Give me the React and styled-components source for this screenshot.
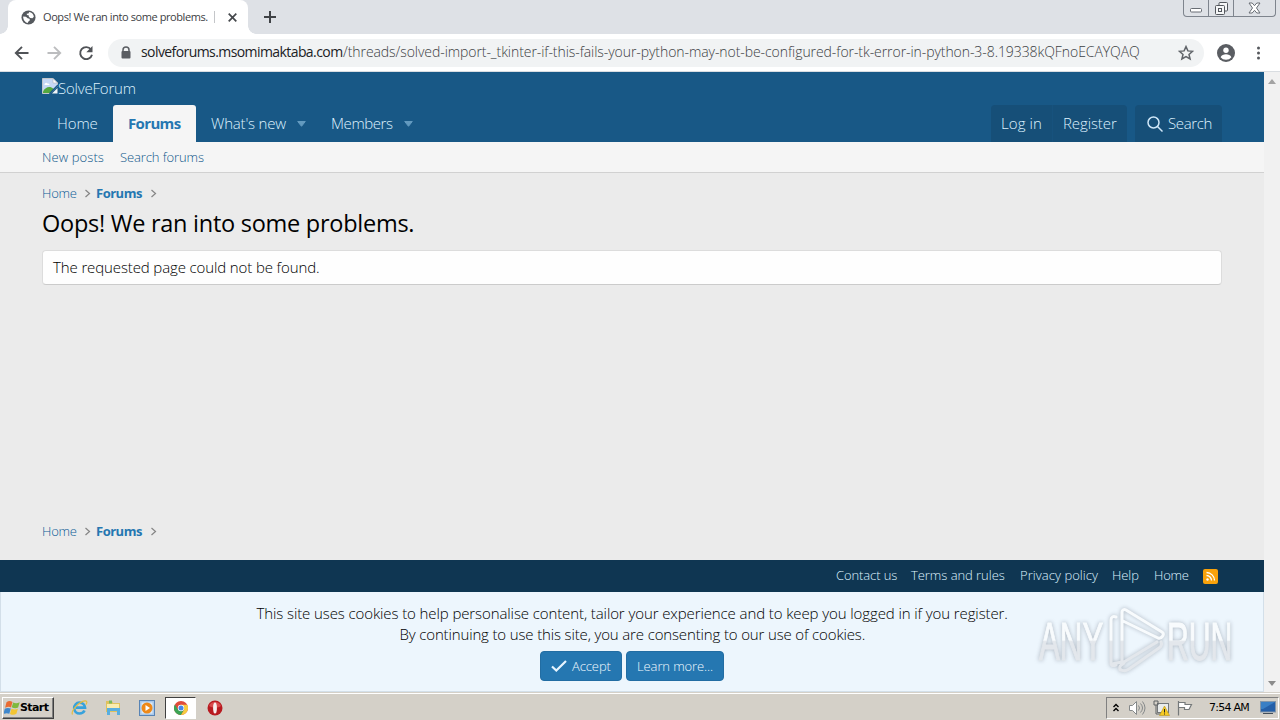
import styled, { createGlobalStyle, css } from 'styled-components';

const GlobalStyle = createGlobalStyle`
  * {
    box-sizing: border-box;
  }

  body {
    margin: 0;
    overflow: hidden;
    font-family: 'Open Sans', 'Noto Sans', sans-serif;
    font-weight: 300;
    color: #000;
  }
`;

const Screen = styled.div`
  position: relative;
  width: 1280px;
  height: 720px;
  display: flex;
  flex-direction: column;
  overflow: hidden;

  svg {
    display: block;
    flex: none;
  }
`;

/* single line of text with a fixed advance width */
const Label = styled.span`
  display: block;
  flex: none;
  width: ${(p) => p.$w}px;
  letter-spacing: ${(p) => p.$ls || 0}px;
  white-space: pre;
`;

/* ---------- browser ---------- */

const TabStrip = styled.div`
  height: 34px;
  flex: none;
  display: flex;
  align-items: flex-start;
  background: #dee1e6;
`;

const TabCorner = styled.div`
  width: 8px;
  height: 34px;
  background: radial-gradient(circle at ${(p) => p.$at} 0, #dee1e6 7.5px, #fff 8px) 0 26px / 8px 8px no-repeat;
`;

const Tab = styled.div`
  width: 240px;
  height: 34px;
  display: flex;
  align-items: center;
  padding-left: 13px;
  border-radius: 8px 8px 0 0;
  background: #fff;
  font-size: 11px;
  font-weight: 400;
  color: #3c4043;

  .title {
    margin-left: 7px;
    padding-bottom: 2px;
  }

  .divider {
    width: 1px;
    height: 12px;
    margin: 0 13px 0 5px;
    background: #c4c6c9;
  }
`;

const NewTab = styled.div`
  padding: 11px 0 0 8px;
`;

const WindowButtons = styled.div`
  display: flex;
  margin: 0 4px 0 auto;
  height: 17px;
  border: 1px solid #7e848d;
  border-top: 0;
  border-radius: 0 0 4px 4px;

  div {
    display: flex;
    justify-content: center;
    align-items: center;
    width: 25px;
    border-right: 1px solid #7e848d;
  }

  div:last-child {
    width: 41px;
    border: 0;
  }
`;

const Toolbar = styled.div`
  height: 38px;
  flex: none;
  display: flex;
  align-items: center;
  padding: 0 14px 0 14px;
  border-bottom: 1px solid #d9dde1;
  background: #fff;

  > svg {
    margin-right: 16px;
  }

  > svg:last-of-type {
    margin-right: 0;
  }
`;

const AddressBar = styled.div`
  width: 1096px;
  height: 28px;
  margin: 0 13px 0 -2px;
  display: flex;
  align-items: center;
  padding: 0 10px 0 12px;
  border-radius: 14px;
  background: #f1f3f4;
  font-size: 14px;
  color: #202124;

  span {
    padding-bottom: 2px;
  }

  .host {
    margin-left: 9px;
    font-weight: 400;
  }

  .path {
    color: #3c4043;
  }

  > svg:last-child {
    margin-left: auto;
  }
`;

/* ---------- page ---------- */

const Viewport = styled.div`
  height: 620px;
  flex: none;
  display: flex;
`;

const Page = styled.div`
  width: 1264px;
  display: flex;
  flex-direction: column;
  background: #ebebeb;
`;

const Scrollbar = styled.div`
  width: 16px;
  display: flex;
  flex-direction: column;
  justify-content: space-between;
  align-items: center;
  padding: 7px 0 6px;
  background: #f1f1f1;
`;

const Header = styled.header`
  height: 70px;
  flex: none;
  padding: 6px 42px 0;
  background: #185886;
`;

const Logo = styled.div`
  height: 27px;
  display: flex;
  align-items: flex-start;
  font-size: 15px;
  line-height: 21px;
  color: #dff2ff;
`;

const Nav = styled.nav`
  height: 37px;
  display: flex;
  font-size: 15px;
  line-height: 37px;
  color: #dff2ff;
`;

const NavItem = styled.a`
  display: flex;
  align-items: center;
  height: 37px;
  padding-left: ${(p) => p.$pad || 15}px;
  width: ${(p) => p.$width}px;

  ${(p) =>
    p.$active &&
    css`
      border-radius: 3px 3px 0 0;
      background: #f5f5f5;
      color: #2577b1;
      font-weight: 700;
    `}

  > svg {
    margin-left: 10px;
  }
`;

const NavButtons = styled.div`
  display: flex;
  margin-left: ${(p) => p.$gap};
`;

const NavButton = styled(NavItem)`
  background: #164f78;
  border-radius: ${(p) => p.$radius};
  border-left: ${(p) => (p.$split ? '1px solid #17527d' : '0')};

  > svg {
    margin: 0 5px 0 0;
  }
`;

const SubNav = styled.div`
  height: 31px;
  flex: none;
  display: flex;
  gap: 16px;
  padding-left: 42px;
  border-bottom: 1px solid #d1d1d1;
  background: #f5f5f5;
  font-size: 13px;
  line-height: 30px;
  color: #0f578a;
`;

const Main = styled.main`
  height: 387px;
  flex: none;
  display: flex;
  flex-direction: column;
  padding: 10px 42px 19px;
`;

const Crumbs = styled.div`
  display: flex;
  align-items: center;
  height: 20px;
  margin-top: ${(p) => (p.$bottom ? 'auto' : 0)};
  font-size: 13px;
  line-height: 20px;
  color: #0b5c97;

  b {
    margin-left: 5px;
    font-weight: 700;
    color: #2577b1;
  }
`;

const Title = styled.h1`
  margin: 4px 0 10px;
  font-size: 23.5px;
  font-weight: 400;
  line-height: 33px;
`;

const Message = styled.div`
  height: 35px;
  padding-left: 10px;
  border: 1px solid #dcdcdc;
  border-bottom-color: #cbcbcb;
  border-radius: 4px;
  background: #fefefe;
  font-size: 15px;
  line-height: 33px;
`;

const Footer = styled.footer`
  height: 32px;
  flex: none;
  display: flex;
  align-items: center;
  justify-content: flex-end;
  gap: 14px;
  padding-right: 46px;
  background: #0f3652;
  font-size: 13px;
  line-height: 18px;
  color: #dff2ff;

  span {
    margin-bottom: 2px;
  }
`;

const Notice = styled.div`
  height: 100px;
  flex: none;
  display: flex;
  flex-direction: column;
  align-items: center;
  padding-top: 11px;
  border: 1px solid #d3dfe9;
  border-top: 0;
  background: #edf6fd;
  font-size: 15px;
  line-height: 21px;
`;

const Actions = styled.div`
  display: flex;
  gap: 4px;
  margin-top: 6px;
`;

const Button = styled.a`
  height: 30px;
  display: flex;
  align-items: center;
  padding: 0 10px;
  width: ${(p) => p.$width}px;
  border: 1px solid #226da3;
  border-radius: 4px;
  background: #2577b1;
  font-size: 13px;
  color: #f0f9ff;

  > svg {
    margin-right: 5px;
  }
`;

const Watermark = styled.svg`
  position: absolute;
  left: 1030px;
  top: 600px;
  filter: drop-shadow(0 0 2px rgba(90, 100, 115, 0.45));
`;

/* ---------- taskbar ---------- */

const Taskbar = styled.div`
  height: 28px;
  flex: none;
  display: flex;
  align-items: center;
  padding: 2px 2px 0;
  border-top: 1px solid #d4d0c8;
  box-shadow: inset 0 1px 0 #fff;
  background: #d4d0c8;
`;

const StartButton = styled.div`
  width: 52px;
  height: 22px;
  display: flex;
  align-items: center;
  padding-left: 1px;
  border: 1px solid;
  border-color: #fff #404040 #404040 #fff;
  box-shadow: inset -1px -1px 0 #808080;
  font: 700 11px 'DejaVu Sans', sans-serif;
  color: #000;
`;

const QuickLaunch = styled.div`
  width: ${(p) => p.$width || 34}px;
  height: 22px;
  margin-left: ${(p) => p.$gap || 0}px;
  display: flex;
  align-items: center;
  justify-content: center;

  ${(p) =>
    p.$active &&
    css`
      border: 1px solid;
      border-color: #404040 #fff #fff #404040;
      background: #fff;
    `}
`;

const Tray = styled.div`
  width: 173px;
  height: 22px;
  margin-left: auto;
  margin-right: -1px;
  display: flex;
  align-items: center;
  padding-left: 6px;
  border: 1px solid;
  border-color: #808080 #fff #fff #808080;
  font: 11px 'DejaVu Sans', sans-serif;
  color: #000;

  .speaker {
    margin-left: 10px;
  }

  .network {
    margin-left: 7px;
  }

  .flag {
    margin-left: 7px;
  }

  .clock {
    margin: 0 10px 0 16px;
  }
`;

const GlobeIcon = () => (
  <svg width="15" height="15" viewBox="0 0 16 16">
    <circle cx="8" cy="8" r="7.5" fill="#55595e" />
    <path d="M8.7 2.2c2.7.3 4.8 2.5 5 5.1l-1.5 1.4-2.3-.3-1.6-1.2.1-1.4-2-.5-.4-1.2 2-.5zM2.3 7l3 .2 1.8 1.6 2 .4.4 1.7-1.6 1.3-.8 1.7C4.4 13.5 2.2 10.5 2.3 7z" fill="#fff" />
  </svg>
);

const BackIcon = ({ forward }) => (
  <svg width="16" height="16" viewBox="0 0 16 16" fill="none" stroke={forward ? '#bcbdbf' : '#505357'} strokeWidth="1.9">
    <path d={forward ? 'M1.5 8H14M8 1.8 14.2 8 8 14.2' : 'M14.5 8H2M8 1.8 1.8 8 8 14.2'} />
  </svg>
);

const ReloadIcon = () => (
  <svg width="16" height="16" viewBox="0 0 16 16">
    <path d="M13 4.5A6 6 0 1 0 14 9.7" fill="none" stroke="#505357" strokeWidth="1.9" />
    <path d="M14.5 1v6.2H8.3z" fill="#505357" />
  </svg>
);

const BrokenImage = () => (
  <svg width="16" height="16" viewBox="0 0 16 16">
    <path d="M.5.5H11L15.5 5v3L8 15.5H.5z" fill="#c6d8f5" stroke="#c5c7ca" />
    <path d="M11 .5V5h4.5z" fill="#fff" stroke="#aeb3b8" strokeWidth=".6" />
    <path d="M2.5 6.5a1.7 1.7 0 0 1 3-1 1.5 1.5 0 0 1 2 1.5h-5z" fill="#fff" />
    <path d="M1 13.5c2-3.5 5-5.2 8.5-4L12 11l-4.3 4H1z" fill="#55a83e" />
    <path d="M15.5 10v5.5H10z" fill="#f2f5f7" />
    <path d="M16 7 7.5 15.8" stroke="#185886" strokeWidth="1.5" />
  </svg>
);

const Caret = () => (
  <svg width="9" height="6" viewBox="0 0 9 6">
    <path d="M.7.5h7.6L4.5 5.3z" fill="#639abf" stroke="#639abf" strokeLinejoin="round" />
  </svg>
);

const Chevron = () => (
  <svg width="7" height="9" viewBox="0 0 7 9">
    <path d="m1.5 1 4 3.5-4 3.5" fill="none" stroke="#858585" strokeWidth="1.2" />
  </svg>
);

const Breadcrumbs = ({ bottom }) => (
  <Crumbs $bottom={bottom}>
    <Label $w={42} $ls={-0.2}>Home</Label>
    <Chevron />
    <b>
      <Label $w={54} $ls={-0.5}>Forums</Label>
    </b>
    <Chevron />
  </Crumbs>
);

const BrowserChrome = () => (
  <>
    <TabStrip>
      <TabCorner $at="0" />
      <Tab>
        <GlobeIcon />
        <Label className="title" $w={166} $ls={-0.42}>Oops! We ran into some problems.</Label>
        <span className="divider" />
        <svg width="9" height="9" viewBox="0 0 9 9" stroke="#45484c" strokeWidth="1.7">
          <path d="m.7.7 7.6 7.6m0-7.6L.7 8.3" />
        </svg>
      </Tab>
      <TabCorner $at="8px" />
      <NewTab>
        <svg width="12" height="12" viewBox="0 0 12 12" stroke="#3f4246" strokeWidth="2">
          <path d="M6 0v12M0 6h12" />
        </svg>
      </NewTab>
      <WindowButtons>
        <div>
          <svg width="13" height="13" viewBox="0 0 13 13">
            <rect x=".5" y="6.5" width="11" height="3.5" rx="1" fill="#fff" stroke="#686d74" />
          </svg>
        </div>
        <div>
          <svg width="13" height="13" viewBox="0 0 13 13" fill="#f5f6f7" stroke="#53575d">
            <rect x="4" y=".5" width="8.5" height="8.5" rx="1" />
            <rect x=".5" y="3.5" width="9" height="9" rx="1" />
            <rect x="3.5" y="6.5" width="3" height="3" />
          </svg>
        </div>
        <div>
          <svg width="13" height="12" viewBox="0 0 13 12">
            <path d="M1 1h3.2l2.3 2.7L8.8 1H12L8.5 6l3.5 5H8.8L6.5 8.3 4.2 11H1l3.5-5z" fill="#fff" stroke="#686d74" />
          </svg>
        </div>
      </WindowButtons>
    </TabStrip>
    <Toolbar>
      <BackIcon />
      <BackIcon forward />
      <ReloadIcon />
      <AddressBar>
        <svg width="12" height="14" viewBox="0 0 12 14">
          <path d="M3 6V4a3 3 0 0 1 6 0v2" fill="none" stroke="#5a5d62" strokeWidth="1.5" />
          <rect x="1.5" y="5" width="9" height="7.5" rx="1" fill="#5a5d62" />
        </svg>
        <Label className="host" $w={202} $ls={-0.58}>solveforums.msomimaktaba.com</Label>
        <Label className="path" $w={798} $ls={-0.07}>
          /threads/solved-import-_tkinter-if-this-fails-your-python-may-not-be-configured-for-tk-error-in-python-3-8.19338kQFnoECAYQAQ
        </Label>
        <svg width="16" height="16" viewBox="0 0 16 16">
          <path d="m8 1.600 1.900 4.300 4.700.4L11 9.400l1.100 4.600L8 11.600 3.900 14 5 9.400 1.400 6.300l4.700-.4z" fill="none" stroke="#606469" strokeWidth="1.500" />
        </svg>
      </AddressBar>
      <svg width="18" height="18" viewBox="0 0 18 18">
        <circle cx="9" cy="9" r="9" fill="#5a5d62" />
        <circle cx="9" cy="6.3" r="2.7" fill="#fff" />
        <path d="M3.6 13.200c1-2 3-2.900 5.400-2.900s4.400.9 5.400 2.900A6.800 6.800 0 0 1 9 15.800a6.800 6.800 0 0 1-5.400-2.600z" fill="#fff" />
      </svg>
      <svg width="10" height="16" viewBox="-6 0 10 16" fill="#55585d">
        <circle cx="1.5" cy="3" r="1.5" />
        <circle cx="1.5" cy="8" r="1.5" />
        <circle cx="1.5" cy="13" r="1.5" />
      </svg>
    </Toolbar>
  </>
);

const SiteHeader = () => (
  <Header>
    <Logo>
      <BrokenImage />
      <Label $w={80} $ls={-0.2}>SolveForum</Label>
    </Logo>
    <Nav>
      <NavItem $width={71}>
        <Label $w={41} $ls={-0.1}>Home</Label>
      </NavItem>
      <NavItem $width={83} $active>
        <Label $w={53} $ls={-0.65}>Forums</Label>
      </NavItem>
      <NavItem $width={120}>
        <Label $w={76} $ls={-0.2}>What's new</Label>
        <Caret />
      </NavItem>
      <NavItem $width={100}>
        <Label $w={63} $ls={-0.4}>Members</Label>
        <Caret />
      </NavItem>
      <NavButtons $gap="auto">
        <NavButton $width={61} $pad={10} $radius="4px 0 0 0">
          <Label $w={41} $ls={0.1}>Log in</Label>
        </NavButton>
        <NavButton $width={75} $pad={10} $radius="0 4px 0 0" $split>
          <Label $w={54} $ls={-0.1}>Register</Label>
        </NavButton>
      </NavButtons>
      <NavButtons $gap="8px">
        <NavButton $width={87} $pad={12} $radius="4px 4px 0 0">
          <svg width="16" height="16" viewBox="0 0 16 16" fill="none" stroke="#cfe7f8" strokeWidth="1.5">
            <circle cx="6.5" cy="6.5" r="5.5" />
            <path d="m10.5 10.5 5 5" />
          </svg>
          <Label $w={44} $ls={-0.35}>Search</Label>
        </NavButton>
      </NavButtons>
    </Nav>
  </Header>
);

const WatermarkLogo = () => (
  <Watermark width="210" height="80" viewBox="0 0 210 80">
    <defs>
      <linearGradient id="shine" x1="0" y1="0" x2="0" y2="80" gradientUnits="userSpaceOnUse">
        <stop offset="50%" stopColor="#f8fbfd" />
        <stop offset="52%" stopColor="#e3e7ec" />
      </linearGradient>
    </defs>
    <g fill="url(#shine)" stroke="url(#shine)" fontFamily="Liberation Sans, sans-serif" fontSize="53">
      <text transform="translate(9 0) scale(.59 1)" y="60">ANY</text>
      <text transform="translate(137 0) scale(.57 1)" y="60">RUN</text>
    </g>
    <g fill="none" stroke="url(#shine)" strokeWidth="3" strokeLinejoin="round" strokeLinecap="round">
      <path d="M86 17c-3-1-5 0-5 3v43c0 3 2 3 5 2" />
      <path d="M92 62V12c0-2 2-3 4-2l36 22c3 2 0 7-4 6L93 21M94 62l33-20" />
      <path d="M82 64 92 62M90 70c-1-4 1-5 4-7m-4 6c3 3 6 2 9 0l30-21c3-2 3-4 2-6" />
    </g>
  </Watermark>
);

const StartFlag = () => (
  <svg width="16" height="16" viewBox="0 0 16 16">
    <path d="M2.5 2.2c2-1.5 4-1.5 6-.2L7 7.5c-1.5-1-3.5-.8-5.9.3z" fill="#e96b32" />
    <path d="M9.2 2.5c2 1 4 1 6.5-.3l-1.6 5.3c-2 1-4.2.8-6.4-.2z" fill="#7fb93c" />
    <path d="M.8 8.7c2-1 4-1 6-.1l-1.5 5.2c-2-1-4-.8-6 .4z" fill="#3f87cc" />
    <path d="M7.5 8.7c2 1 4 1.200 6.400.1l-1.500 5c-2 1.300-4 1.300-6.400.1z" fill="#f3c532" />
  </svg>
);

const Windows = () => (
  <Taskbar>
    <StartButton>
      <StartFlag />
      <Label $w={30} $ls={-0.6}>Start</Label>
    </StartButton>
    <QuickLaunch $gap={8}>
      <svg width="17" height="17" viewBox="0 0 17 17" fill="none">
        <path d="M13.5 11.5c-1 2-2.8 3-4.9 3a5.4 5.4 0 1 1 5.4-5.800H5" stroke="#37a2dc" strokeWidth="2.7" />
        <path d="M1.5 15.5C-.5 12 8 2.5 14 1.800c2.500-.2 2.200 2 .8 3.800" stroke="#e5bd40" strokeWidth="1.2" />
      </svg>
    </QuickLaunch>
    <QuickLaunch>
      <svg width="17" height="17" viewBox="0 0 17 17">
        <path d="M1 2h6l1 2h7v9H1z" fill="#dfc25e" />
        <path d="M2 5h12v7H2z" fill="#f8ecb0" />
        <path d="M4 1.500h3v3H4z" fill="#79b95a" />
        <path d="M2 9h13v7h-3v-4H5v4H2z" fill="#58aee0" />
      </svg>
    </QuickLaunch>
    <QuickLaunch>
      <svg width="16" height="16" viewBox="0 0 16 16">
        <rect x=".5" y=".5" width="15" height="15" fill="#a9c9eb" stroke="#5884b5" />
        <rect x="2.5" y="2.5" width="11" height="11" fill="#ddebf8" />
        <circle cx="8" cy="8" r="5.5" fill="#ee8919" />
        <path d="m6.500 5 4.500 3-4.500 3z" fill="#fff" />
      </svg>
    </QuickLaunch>
    <QuickLaunch $active $width={31} $gap={1}>
      <svg width="14" height="14" viewBox="0 0 14 14">
        <circle cx="7" cy="7" r="7" fill="#e04b3b" />
        <path d="M.9 3.500A7 7 0 0 0 7 14l3-5.300H4z" fill="#3ba454" />
        <path d="M7 14a7 7 0 0 0 6.200-10.300H7l3.200 5z" fill="#f6cc3f" />
        <circle cx="7" cy="7" r="3.2" fill="#fff" />
        <circle cx="7" cy="7" r="2.5" fill="#4587e8" />
      </svg>
    </QuickLaunch>
    <QuickLaunch $gap={3} $width={32}>
      <svg width="16" height="16" viewBox="0 0 16 16">
        <circle cx="8" cy="8" r="7.5" fill="#b81a20" />
        <path d="M2 6a6.500 6.500 0 0 1 12 0c-3 2-8 2-12 0z" fill="#d94b4d" />
        <ellipse cx="8" cy="8" rx="1.9" ry="5.5" fill="#f7eeee" />
      </svg>
    </QuickLaunch>
    <Tray>
      <svg width="6" height="10" viewBox="0 0 6 10" fill="none" stroke="#000" strokeWidth="1.4">
        <path d="M.5 4 3 1.500 5.500 4m-5 4L3 5.500 5.500 8" />
      </svg>
      <svg className="speaker" width="17" height="16" viewBox="0 0 17 16" fill="none" stroke="#85898a">
        <path d="M.5 5.500h3l4-4v13l-4-4h-3z" fill="#fff" />
        <path d="M9.500 5.500q2 2.500 0 5M11.500 3.500q4 4.500 0 9M13.500 1.500q5 6.500 0 13" />
      </svg>
      <svg className="network" width="17" height="16" viewBox="0 0 17 16">
        <rect x="4.5" y="3.5" width="11" height="9" fill="#e9ecec" stroke="#73777a" />
        <path d="M1 1v4h4V1M3 5v9h5M1 1h4" fill="none" stroke="#5e6264" />
        <path d="m11.500 6 5 9.500h-10z" fill="#f5ca22" stroke="#b89316" strokeWidth=".6" />
        <path d="M11.500 9v3.500m0 1v1" stroke="#222" />
      </svg>
      <svg className="flag" width="16" height="16" viewBox="0 0 16 16">
        <path d="M1.500 1v14.500M2 2.500h6v2h6.500L12 9.500H7.500v-2H2" fill="#fff" stroke="#75797a" strokeWidth="1.2" />
      </svg>
      <Label className="clock" $w={41} $ls={-0.75}>7:54 AM</Label>
      <svg width="16" height="15" viewBox="0 0 16 15">
        <rect x=".5" y="1.5" width="15" height="10.5" fill="#245fa8" stroke="#8396a9" />
        <path d="M1 2h14L3 9H1z" fill="#397fc5" />
        <path d="M3 13.500h10" stroke="#444e59" />
      </svg>
    </Tray>
  </Taskbar>
);

const App = () => {
  return (
    <Screen>
      <GlobalStyle />
      <BrowserChrome />
      <Viewport>
        <Page>
          <SiteHeader />
          <SubNav>
            <Label $w={62} $ls={0.1}>New posts</Label>
            <Label $w={84} $ls={-0.1}>Search forums</Label>
          </SubNav>
          <Main>
            <Breadcrumbs />
            <Title>
              <Label $w={372} $ls={-0.26}>Oops! We ran into some problems.</Label>
            </Title>
            <Message>
              <Label $w={267} $ls={-0.12}>The requested page could not be found.</Label>
            </Message>
            <Breadcrumbs bottom />
          </Main>
          <Footer>
            <Label $w={61} $ls={-0.1}>Contact us</Label>
            <Label $w={95} $ls={-0.05}>Terms and rules</Label>
            <Label $w={78} $ls={0.05}>Privacy policy</Label>
            <Label $w={28} $ls={-0.1}>Help</Label>
            <Label $w={35} $ls={-0.2}>Home</Label>
            <svg width="15" height="15" viewBox="0 0 15 15" fill="none" stroke="#fff" strokeWidth="1.3">
              <rect width="15" height="15" rx="2" fill="#f9a20b" stroke="none" />
              <circle cx="4.5" cy="10.5" r="1.2" fill="#fff" stroke="none" />
              <path d="M3.500 6.500a5 5 0 0 1 5 5M3.500 3.500a8 8 0 0 1 8 8" />
            </svg>
          </Footer>
          <Notice>
            <Label $w={751} $ls={-0.1}>
              This site uses cookies to help personalise content, tailor your experience and to keep you logged in if you register.
            </Label>
            <Label $w={465} $ls={-0.145}>By continuing to use this site, you are consenting to our use of cookies.</Label>
            <Actions>
              <Button $width={82}>
                <svg width="16" height="14" viewBox="0 0 16 14">
                  <path d="m1 7.500 4.300 4L15 2" fill="none" stroke="#e7f5ff" strokeWidth="2.2" />
                </svg>
                <Label $w={40} $ls={-0.1}>Accept</Label>
              </Button>
              <Button $width={98}>
                <Label $w={77} $ls={-0.1}>Learn more...</Label>
              </Button>
            </Actions>
          </Notice>
        </Page>
        <Scrollbar>
          <svg width="8" height="5" viewBox="0 0 8 5">
            <path d="M0 5 4 0l4 5z" fill="#a3a3a3" />
          </svg>
          <svg width="8" height="5" viewBox="0 0 8 5">
            <path d="m0 0 4 5 4-5z" fill="#8b8b8b" />
          </svg>
        </Scrollbar>
      </Viewport>
      <Windows />
      <WatermarkLogo />
    </Screen>
  );
};

export default App;
